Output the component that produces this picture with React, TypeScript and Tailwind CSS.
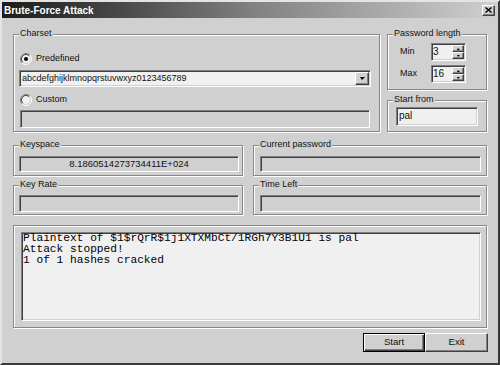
import React from "react";

const sunken =
  "border border-t-[#808080] border-l-[#808080] border-r-white border-b-white shadow-[inset_1px_1px_0_#404040,inset_-1px_-1px_0_#d0d0d0]";
const raised =
  "border border-t-white border-l-white border-r-[#404040] border-b-[#404040] shadow-[inset_-1px_-1px_0_#808080]";

const Group = ({ label, className, children }: { label: string; className?: string; children?: React.ReactNode }) => (
  <div className={`relative border border-[#888] shadow-[inset_1px_1px_0_#fff,1px_1px_0_#fff] ${className ?? ""}`}>
    {label && <span className="absolute left-[5px] top-[-7px] bg-[#d0d0d0] px-[1px] leading-[11px]">{label}</span>}
    {children}
  </div>
);

const Radio = ({ checked }: { checked?: boolean }) => (
  <svg width="12" height="12" viewBox="0 0 12 12" className="shrink-0">
    <circle cx="6" cy="6" r="5" fill="#f0f0f0" />
    <path d="M9.9 2.1 A5.5 5.5 0 0 0 2.1 9.9" stroke="#808080" fill="none" />
    <path d="M9.2 2.8 A4.5 4.5 0 0 0 2.8 9.2" stroke="#404040" fill="none" />
    <path d="M9.9 2.1 A5.5 5.5 0 0 1 2.1 9.9" stroke="#fff" fill="none" />
    <path d="M9.2 2.8 A4.5 4.5 0 0 1 2.8 9.2" stroke="#d0d0d0" fill="none" />
    {checked && <circle cx="6" cy="6" r="2" fill="#000" />}
  </svg>
);

const Arrow = ({ up, size = 5 }: { up?: boolean; size?: number }) => (
  <svg width={size * 2 - 1} height={size} viewBox={`0 0 ${size * 2 - 1} ${size}`}>
    <polygon
      points={up ? `${size - 1},0 ${size * 2 - 1},${size} 0,${size}` : `0,0 ${size * 2 - 1},0 ${size - 1},${size}`}
      fill="#000"
    />
  </svg>
);

const Spin = ({ value }: { value: string }) => (
  <div className={`${sunken} w-[35px] h-[18px] bg-[#f0f0f0] flex items-stretch`}>
    <span className="flex-1 pl-[1px] text-[10px] leading-[15px]">{value}</span>
    <div className="w-[12px] flex flex-col mr-[1px] my-[1px]">
      <div className={`${raised} bg-[#d0d0d0] flex-1 flex items-center justify-center`}>
        <Arrow up size={2} />
      </div>
      <div className={`${raised} bg-[#d0d0d0] flex-1 flex items-center justify-center`}>
        <Arrow size={2} />
      </div>
    </div>
  </div>
);

export default function App() {
  return (
    <div className="w-[500px] h-[365px] overflow-hidden bg-[#d0d0d0] border-2 border-t-[#e4e4e4] border-l-[#e4e4e4] border-r-[#3a3a3a] border-b-[#3a3a3a] font-['Liberation_Sans',Arial,sans-serif] text-[9px] text-[#111]">
      <div className="h-[16px] flex items-center justify-between bg-linear-to-r from-[#1c1c1c] via-[#808080] to-[#d0d0d0] pl-[2px] pr-[3px]">
        <span className="font-bold text-[10px] text-white">Brute-Force Attack</span>
        <div className={`${raised} bg-[#d0d0d0] w-[13px] h-[11px] flex items-center justify-center`}>
          <svg width="7" height="6" viewBox="0 0 7 6">
            <path d="M0.5 0.5 L6.5 5.5 M6.5 0.5 L0.5 5.5" stroke="#000" strokeWidth="1.4" />
          </svg>
        </div>
      </div>

      <div className="mt-[16px] pl-[11px] flex gap-[7px]">
        <Group label="Charset" className="w-[367px] h-[98px]">
          <div className="flex flex-col pl-[5px] pt-[18px]">
            <div className="flex items-center gap-[4px] h-[12px] pl-[1px]">
              <Radio checked />
              <span>Predefined</span>
            </div>
            <div className={`${sunken} mt-[5px] w-[352px] h-[17px] bg-[#f0f0f0] flex items-center`}>
              <span className="flex-1 pl-[2px]">abcdefghijklmnopqrstuvwxyz0123456789</span>
              <div className={`${raised} bg-[#d0d0d0] w-[14px] h-[13px] mr-[1px] flex items-center justify-center`}>
                <Arrow size={3} />
              </div>
            </div>
            <div className="mt-[7px] flex items-center gap-[4px] h-[12px] pl-[1px]">
              <Radio />
              <span>Custom</span>
            </div>
            <div className={`${sunken} mt-[4px] ml-[1px] w-[350px] h-[18px] bg-[#d0d0d0]`} />
          </div>
        </Group>

        <div className="flex flex-col w-[100px]">
          <Group label="Password length" className="h-[56px]">
            <div className="pt-[8px] flex flex-col gap-[4px]">
              <div className="flex items-center h-[18px] pl-[12px]">
                <span className="w-[31px]">Min</span>
                <Spin value="3" />
              </div>
              <div className="flex items-center h-[18px] pl-[12px]">
                <span className="w-[31px]">Max</span>
                <Spin value="16" />
              </div>
            </div>
          </Group>
          <Group label="Start from" className="mt-[10px] h-[32px]">
            <div className="pl-[8px] pt-[6px]">
              <div className={`${sunken} w-[82px] h-[19px] bg-[#f0f0f0] pl-[2px] text-[10px] leading-[16px]`}>pal</div>
            </div>
          </Group>
        </div>
      </div>

      <div className="mt-[13px] pl-[11px] flex gap-[10px]">
        <Group label="Keyspace" className="w-[230px] h-[31px]">
          <div className="pl-[5px] pt-[10px]">
            <div className={`${sunken} w-[220px] h-[16px] flex items-center justify-center text-[9.5px]`}>
              8.1860514273734411E+024
            </div>
          </div>
        </Group>
        <Group label="Current password" className="w-[234px] h-[31px]">
          <div className="pl-[6px] pt-[10px]">
            <div className={`${sunken} w-[221px] h-[16px]`} />
          </div>
        </Group>
      </div>

      <div className="mt-[9px] pl-[11px] flex gap-[10px]">
        <Group label="Key Rate" className="w-[230px] h-[30px]">
          <div className="pl-[5px] pt-[9px]">
            <div className={`${sunken} w-[220px] h-[17px]`} />
          </div>
        </Group>
        <Group label="Time Left" className="w-[234px] h-[30px]">
          <div className="pl-[6px] pt-[9px]">
            <div className={`${sunken} w-[221px] h-[17px]`} />
          </div>
        </Group>
      </div>

      <div className="mt-[10px] pl-[11px]">
        <Group label="" className="w-[474px] h-[103px]">
          <div className="pl-[7px] pt-[6px]">
            <div className={`${sunken} w-[460px] h-[89px] bg-[#f0f0f0] pl-[1px] font-['Liberation_Mono','Courier_New',monospace] text-[11.2px] leading-[11px] whitespace-pre text-black`}>
              {"Plaintext of $1$rQrR$1j1XTXMbCt/1RGh7Y3B1U1 is pal\nAttack stopped!\n1 of 1 hashes cracked"}
            </div>
          </div>
        </Group>
      </div>

      <div className="mt-[5px] pr-[10px] flex justify-end">
        <button className="w-[62px] h-[19px] border border-black bg-[#d0d0d0] shadow-[inset_1px_1px_0_#fff,inset_-1px_-1px_0_#404040,inset_-2px_-2px_0_#808080] text-[9.5px]">
          Start
        </button>
        <button className={`${raised} w-[63px] h-[19px] bg-[#d0d0d0] text-[9.5px]`}>Exit</button>
      </div>
    </div>
  );
}
